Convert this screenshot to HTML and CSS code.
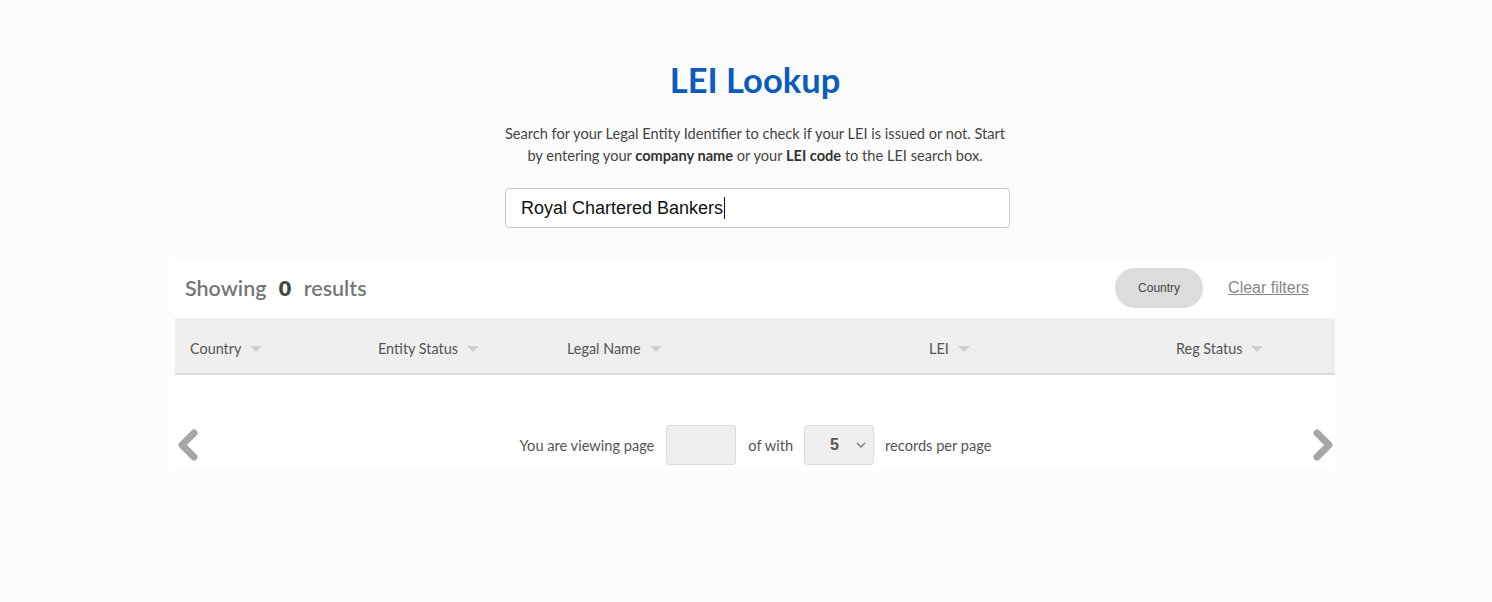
FILE: index.html
```html
<!DOCTYPE html>
<html lang="en">
<head>
<meta charset="utf-8">
<title>LEI Lookup</title>
<link rel="stylesheet" href="styles.css">
</head>
<body>
<main class="page">
  <section class="intro">
    <h1 class="title">LEI Lookup</h1>
    <p class="lead">Search for your Legal Entity Identifier to check if your LEI is issued or not. Start<br>by entering your <strong>company name</strong> or your <strong>LEI code</strong> to the LEI search box.</p>
    <div class="search"><span class="search-text">Royal Chartered Bankers</span><span class="caret"></span></div>
  </section>

  <section class="panel">
    <div class="panel-head">
      <div class="count">Showing <b>0</b> results</div>
      <div class="filters">
        <span class="pill">Country</span>
        <a class="clear" href="#">Clear filters</a>
      </div>
    </div>
    <div class="thead">
      <div class="th">Country <span class="tri"></span></div>
      <div class="th">Entity Status <span class="tri"></span></div>
      <div class="th">Legal Name <span class="tri"></span></div>
      <div class="th">LEI <span class="tri"></span></div>
      <div class="th">Reg Status <span class="tri"></span></div>
    </div>
    <div class="pager">
      <svg class="arrow" width="24" height="34" viewBox="0 0 24 34"><polyline points="18,5 6,17 18,29" fill="none" stroke="#a6a6a6" stroke-width="7" stroke-linecap="round" stroke-linejoin="round"/></svg>
      <div class="pager-mid">
        <span>You are viewing page</span>
        <span class="page-box"></span>
        <span>of with</span>
        <span class="select-box"><b>5</b><svg width="10" height="6" viewBox="0 0 10 6"><polyline points="1,1 5,5 9,1" fill="none" stroke="#777" stroke-width="1.3"/></svg></span>
        <span>records per page</span>
      </div>
      <svg class="arrow" width="24" height="34" viewBox="0 0 24 34"><polyline points="6,5 18,17 6,29" fill="none" stroke="#a6a6a6" stroke-width="7" stroke-linecap="round" stroke-linejoin="round"/></svg>
    </div>
  </section>
</main>
</body>
</html>
```
FILE: styles.css
```css
* { box-sizing: border-box; }
body {
  margin: 0;
  background: #fcfcfc;
  font-family: Lato, "Open Sans", "Liberation Sans", sans-serif;
  color: #444;
}
.page {
  width: 1160px;
  margin-left: 175px;
  padding-top: 59px;
  height: 602px;
}
.intro {
  display: flex;
  flex-direction: column;
  align-items: center;
}
.title {
  margin: 0;
  font-size: 34.5px;
  line-height: 42px;
  font-weight: 700;
  color: #0a5cbd;
}
.lead {
  width: 520px;
  margin: 22px 0 0;
  text-align: center;
  font-size: 14.6px;
  line-height: 22px;
  color: #444;
}
.lead strong { font-weight: 700; color: #333; }
.search {
  margin-top: 21px;
  width: 505px;
  height: 40px;
  margin-left: 5px;
  border: 1px solid #c8c8c8;
  border-radius: 4px;
  background: #fff;
  display: flex;
  align-items: center;
  padding-left: 15px;
  font-family: "Liberation Sans", Arial, sans-serif;
  font-size: 18px;
  color: #111;
}
.caret { width: 1px; height: 22px; background: #111; margin-left: 1px; }
.panel {
  margin-top: 30px;
  background: #fff;
  padding-bottom: 5px;
}
.panel-head {
  display: flex;
  justify-content: space-between;
  align-items: center;
  padding: 10px 26px 10px 10px;
}
.count {
  font-size: 21.5px;
  color: #777;
  font-weight: 600;
  word-spacing: 6px;
}
.count b { color: #444; font-weight: 800; margin: 0 1px; }
.filters { display: flex; align-items: center; gap: 25px; }
.pill {
  width: 88px;
  height: 40px;
  border-radius: 20px;
  background: #dcdcdc;
  display: flex;
  align-items: center;
  justify-content: center;
  font-family: "Liberation Sans", Arial, sans-serif;
  font-size: 12px;
  color: #444;
}
.clear {
  font-family: "Liberation Sans", Arial, sans-serif;
  font-size: 16px;
  color: #888;
  text-decoration: underline;
}
.thead {
  display: grid;
  grid-template-columns: 188px 189px 362px 247px 1fr;
  height: 57px;
  padding-top: 5px;
  background: #efefef;
  border-bottom: 2px solid #dcdcdc;
  align-items: center;
}
.th {
  padding-left: 15px;
  font-size: 14.4px;
  color: #555;
  display: flex;
  align-items: center;
}
.tri {
  display: inline-block;
  margin-left: 9px;
  width: 0; height: 0;
  border-left: 6px solid transparent;
  border-right: 6px solid transparent;
  border-top: 6px solid #cfcfcf;
  margin-top: 2px;
}
.pager {
  margin-top: 50px;
  height: 40px;
  display: flex;
  align-items: center;
  justify-content: space-between;
  padding: 0 0 0 1px;
}
.pager-mid {
  display: flex;
  align-items: center;
  gap: 11px;
  font-size: 14.6px;
  color: #555;
}
.page-box {
  width: 70px;
  height: 40px;
  background: #efefef;
  border: 1px solid #dcdcdc;
  border-radius: 3px;
  margin: 0 1px;
}
.select-box {
  width: 70px;
  height: 40px;
  background: #efefef;
  border: 1px solid #dcdcdc;
  border-radius: 3px;
  display: flex;
  align-items: center;
  justify-content: space-between;
  padding: 0 7px 0 25px;
  font-family: "Liberation Sans", Arial, sans-serif;
  font-size: 16px;
  color: #555;
}
```
